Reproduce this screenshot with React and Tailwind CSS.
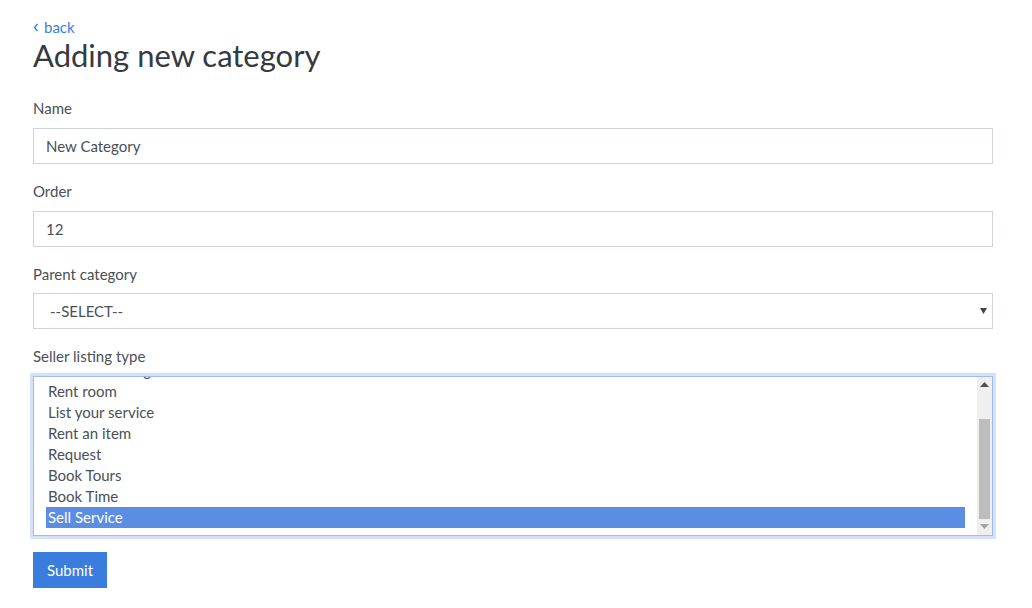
import React from "react";

const listingTypes = [
    "Rent something",
    "Rent room",
    "List your service",
    "Rent an item",
    "Request",
    "Book Tours",
    "Book Time",
    "Sell Service",
];

function Label({ children, className = "mb-[9px]" }) {
    return <label className={`block text-[15px] leading-[22px] text-[#495057] ${className}`}>{children}</label>;
}

export default function App() {
    return (
        <div className="min-h-screen bg-white font-['Lato',sans-serif] text-[#495057]">
            <div className="w-[960px] ml-[33px] pt-[17px]">
                {/* Header */}
                <a href="#" className="flex items-center gap-[5px] text-[15px] leading-[20px] text-[#3b7ddd]">
                    <svg width="6" height="9" viewBox="0 0 6 9" fill="none" className="mt-[1px]">
                        <path d="M4.5 1L1.5 4.5L4.5 8" stroke="currentColor" strokeWidth="1.3" />
                    </svg>
                    back
                </a>
                <h1 className="text-[31px] leading-[36px] text-[#343a40] mb-[24px]">Adding new category</h1>

                {/* Name */}
                <div className="mb-[16px]">
                    <Label>Name</Label>
                    <input
                        type="text"
                        defaultValue="New Category"
                        className="block w-full h-[36px] border border-[#ced4da] px-[12px] text-[15px] text-[#495057] outline-none"
                    />
                </div>

                {/* Order */}
                <div className="mb-[16px]">
                    <Label>Order</Label>
                    <input
                        type="text"
                        defaultValue="12"
                        className="block w-full h-[36px] border border-[#ced4da] px-[12px] text-[15px] text-[#495057] outline-none"
                    />
                </div>

                {/* Parent category */}
                <div className="mb-[16px]">
                    <Label className="mb-[8px]">Parent category</Label>
                    <div className="flex items-center justify-between h-[36px] border border-[#ced4da] pl-[16px] pr-[5px] text-[15px] text-[#495057]">
                        <span>--SELECT--</span>
                        <svg width="7" height="6" viewBox="0 0 7 6">
                            <path d="M0 0H7L3.5 6Z" fill="#444" />
                        </svg>
                    </div>
                </div>

                {/* Seller listing type */}
                <div className="mb-[16px]">
                    <Label className="mb-[9px]">Seller listing type</Label>
                    <div className="flex h-[160px] border border-[#9ebcf0] ring-[3px] ring-[#d4e1f8]">
                        <div className="flex-1 overflow-hidden pl-[12px] pr-[12px]">
                            <div className="-mt-[17px]">
                                {listingTypes.map((t, i) => (
                                    <div
                                        key={t}
                                        className={
                                            i === listingTypes.length - 1
                                                ? "h-[21px] leading-[21px] px-[2px] text-[15px] bg-[#5b8de2] text-white"
                                                : "h-[21px] leading-[21px] px-[2px] text-[15px] text-[#495057]"
                                        }
                                    >
                                        {t}
                                    </div>
                                ))}
                            </div>
                        </div>
                        {/* Scrollbar */}
                        <div className="w-[15px] bg-[#efefef] flex flex-col items-center">
                            <svg width="9" height="5" viewBox="0 0 9 5" className="mt-[5px]">
                                <path d="M4.5 0L9 5H0Z" fill="#505050" />
                            </svg>
                            <div className="w-[11px] h-[100px] bg-[#bdbdbd] mt-[32px]" />
                            <svg width="9" height="5" viewBox="0 0 9 5" className="mt-[5px]">
                                <path d="M0 0H9L4.5 5Z" fill="#a3a3a3" />
                            </svg>
                        </div>
                    </div>
                </div>

                <button type="button" className="h-[36px] w-[74px] bg-[#3b7ddd] text-white text-[15px]">
                    Submit
                </button>
            </div>
        </div>
    );
}
